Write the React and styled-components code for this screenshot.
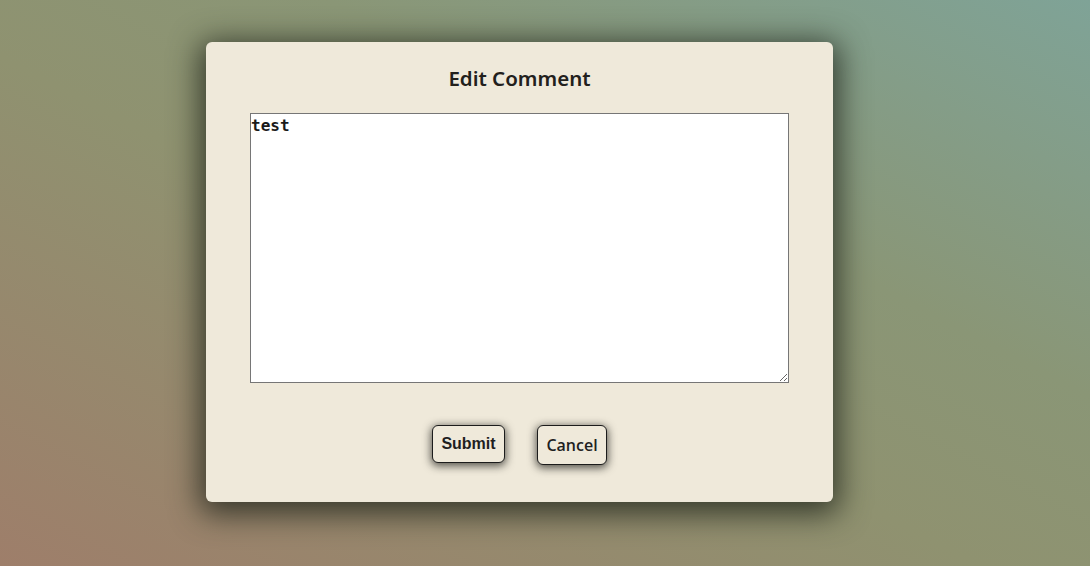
import React from "react";
import styled, { createGlobalStyle } from "styled-components";

const Global = createGlobalStyle`
  html, body { margin: 0; padding: 0; height: 100%; }
  body {
    background: linear-gradient(to top right, #9e7e6a 0%, #8f9270 45%, #8a9676 65%, #7fa397 100%);
    overflow: hidden;
  }
  #root { height: 100%; }
`;

const Page = styled.div`
  width: 1090px;
  height: 566px;
  display: flex;
  justify-content: center;
  align-items: flex-start;
  padding-top: 42px;
  box-sizing: border-box;
  padding-right: 51px;
`;

const Modal = styled.div`
  width: 627px;
  height: 460px;
  box-sizing: border-box;
  background: #efe9da;
  border-radius: 6px;
  box-shadow: 0 6px 30px 6px rgba(30, 35, 25, 0.78);
  display: flex;
  flex-direction: column;
  align-items: center;
  padding-top: 23px;
`;

const Title = styled.h2`
  margin: 0;
  font-family: "Noto Sans", "Open Sans", sans-serif;
  font-weight: 600;
  font-size: 20.5px;
  line-height: 27px;
  color: #22201c;
`;

const Area = styled.textarea`
  margin-top: 21px;
  width: 539px;
  height: 270px;
  box-sizing: border-box;
  padding: 2px 0 0 0;
  border: 1px solid #767676;
  background: #fff;
  font-family: "DejaVu Sans Mono", monospace;
  font-weight: bold;
  font-size: 16px;
  line-height: 20px;
  color: #1a1a1a;
  outline: none;
  resize: both;
`;

const Actions = styled.div`
  margin-top: 42px;
  display: flex;
  gap: 32px;
  align-items: flex-start;
`;

const Button = styled.button`
  background: #efe9da;
  border: 1px solid #1c1c1c;
  border-radius: 6px;
  box-shadow: 0 2px 8px 1px rgba(20, 20, 15, 0.7);
  color: #1f1f1f;
  font-family: ${(p) => (p.$alt ? `"Open Sans", "Noto Sans", sans-serif` : `"Liberation Sans", Arial, sans-serif`)};
  font-weight: ${(p) => (p.$alt ? 600 : 700)};
  font-size: 16px;
  width: ${(p) => (p.$alt ? "70px" : "73px")};
  height: ${(p) => (p.$alt ? "40px" : "38px")};
  padding: 0;
  cursor: pointer;
`;

export default function App() {
  return (
    <>
      <Global />
      <Page>
        <Modal>
          <Title>Edit Comment</Title>
          <Area defaultValue="test" />
          <Actions>
            <Button>Submit</Button>
            <Button $alt>Cancel</Button>
          </Actions>
        </Modal>
      </Page>
    </>
  );
}
